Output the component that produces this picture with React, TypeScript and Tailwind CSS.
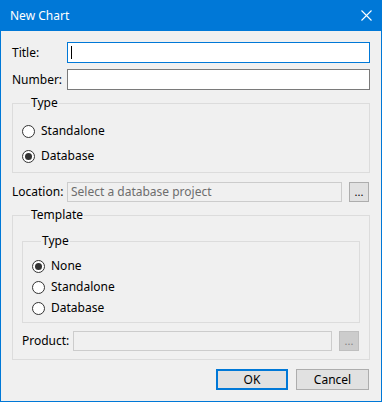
import React from "react";

function Radio({ label, checked }: { label: string; checked?: boolean }) {
  return (
    <div className="h-[20px] flex items-center gap-[6px]">
      <svg width="13" height="13" viewBox="0 0 13 13" className="shrink-0">
        <circle cx="6.5" cy="6.5" r="6" fill="#ffffff" stroke="#333333" strokeWidth="1" />
        {checked && <circle cx="6.5" cy="6.5" r="3.5" fill="#333333" />}
      </svg>
      <span>{label}</span>
    </div>
  );
}

function Browse({ disabled }: { disabled?: boolean }) {
  return (
    <button
      className={`w-[20px] h-[20px] shrink-0 flex items-end justify-center pb-[4px] border text-[11px] leading-none ${
        disabled
          ? "bg-[#cccccc] border-[#bfbfbf] text-[#838383]"
          : "bg-[#e1e1e1] border-[#adadad] text-black"
      }`}
    >
      ...
    </button>
  );
}

export default function App() {
  return (
    <div className="w-[382px] h-[402px] bg-[#0078d7] flex flex-col font-['Segoe_UI','Noto_Sans',sans-serif] text-[12px] leading-[16px]">
      {/* title bar */}
      <div className="h-[31px] shrink-0 flex items-center justify-between pl-[10px] pr-[10px] text-white">
        <span>New Chart</span>
        <svg width="11" height="11" viewBox="0 0 11 11">
          <path d="M0.5 0.5 L10.5 10.5 M10.5 0.5 L0.5 10.5" stroke="#ffffff" strokeWidth="1.1" />
        </svg>
      </div>

      {/* body */}
      <div className="flex-1 mx-[1px] mb-[1px] bg-[#f0f0f0] px-[11px] pt-[11px] text-black">
        <div className="h-[21px] flex items-center">
          <span className="w-[55px] shrink-0">Title:</span>
          <div className="flex-1 h-[21px] border border-[#0078d7] bg-white flex items-center pl-[3px]">
            <div className="w-[1px] h-[13px] bg-black" />
          </div>
        </div>
        <div className="h-[21px] mt-[6px] flex items-center">
          <span className="w-[55px] shrink-0">Number:</span>
          <div className="flex-1 h-[21px] border border-[#7a7a7a] bg-white" />
        </div>

        <fieldset className="mt-[5px] border border-[#dcdcdc] pl-[9px] pt-[10px] pb-[6px] flex flex-col gap-[5px]">
          <legend className="ml-[8px] px-[1px]">Type</legend>
          <Radio label="Standalone" />
          <Radio label="Database" checked />
        </fieldset>

        <div className="h-[20px] mt-[9px] flex items-center">
          <span className="w-[55px] shrink-0">Location:</span>
          <div className="flex-1 h-[20px] border border-[#cccccc] bg-[#f0f0f0] flex items-center pl-[3px] text-[#6d6d6d]">
            Select a database project
          </div>
          <div className="ml-[7px] mr-[1px] flex">
            <Browse />
          </div>
        </div>

        <fieldset className="mt-[5px] border border-[#dcdcdc] px-[9px] pt-[10px] pb-[8px]">
          <legend className="ml-[8px] px-[1px]">Template</legend>
          <fieldset className="border border-[#dcdcdc] pl-[9px] pt-[7px] pb-[4px] flex flex-col gap-[1px]">
            <legend className="ml-[9px] px-[1px]">Type</legend>
            <Radio label="None" checked />
            <Radio label="Standalone" />
            <Radio label="Database" />
          </fieldset>
          <div className="h-[20px] mt-[8px] flex items-center">
            <span className="w-[51px] shrink-0">Product:</span>
            <div className="flex-1 h-[20px] border border-[#cccccc] bg-[#f0f0f0]" />
            <div className="ml-[7px] mr-[1px] flex">
              <Browse disabled />
            </div>
          </div>
        </fieldset>

        <div className="mt-[9px] flex justify-end gap-[8px] pr-[1px]">
          <button className="w-[72px] h-[21px] border-2 border-[#0078d7] bg-[#e1e1e1] flex items-center justify-center">
            OK
          </button>
          <button className="w-[73px] h-[21px] border border-[#adadad] bg-[#e1e1e1] flex items-center justify-center">
            Cancel
          </button>
        </div>
      </div>
    </div>
  );
}
